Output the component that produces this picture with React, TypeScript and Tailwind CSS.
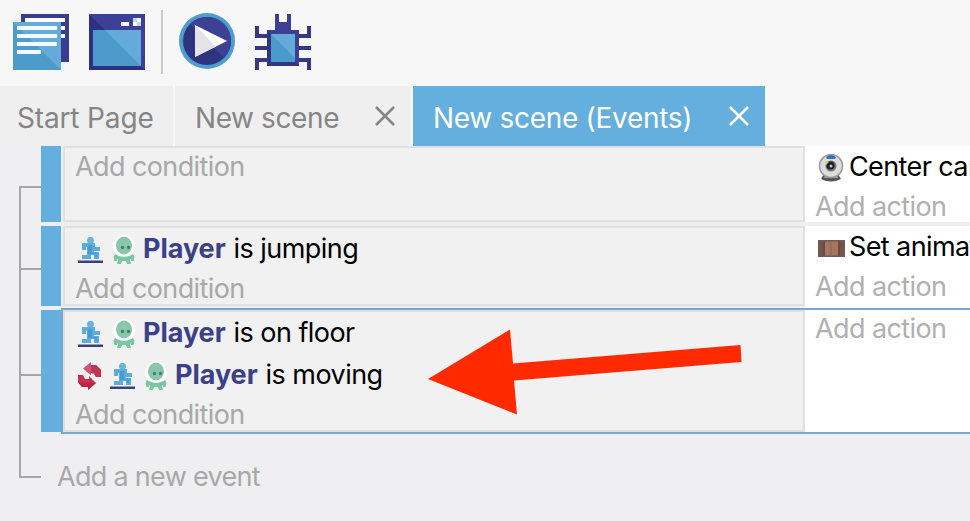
import React from "react";

const PlatformerIcon = () => (
  <svg className="h-[26px] w-[26px] shrink-0" viewBox="0 0 26 26">
    <circle cx="12.500" cy="3.300" r="3.500" fill="#68b3e0" />
    <path d="M4 6h13v4h5v4h-6v1h5v7h-5v-4h-3v4H4v-4h5v-8H8v3H4z" fill="#5badde" />
    <path d="M10 8h4v8h5v4h-2v-3h-7z" fill="#4799d2" />
    <path d="M0 23.500h25V26H0z" fill="#3c3f7d" />
  </svg>
);

const AlienIcon = () => (
  <svg className="h-[32px] w-[24px] shrink-0" viewBox="0 0 24 32">
    <circle cx="12" cy="12" r="11" fill="#fff" />
    <path d="M3 20q9 5 18 0l1.500 3-1 4H19v-2l-1 1 1 4h-4l-1-3h-4l-1 3H5l1-4-1-1v2H2.500l-1-4z" fill="#7cc5a3" />
    <path d="M4 18.500q8 6 16 0v2q-8 4.500-16 0z" fill="#fff" />
    <ellipse cx="12" cy="11.500" rx="8" ry="9" fill="#88c7a9" />
    <circle cx="10.500" cy="13.500" r="1.700" fill="#477e67" />
    <circle cx="16.500" cy="13.500" r="1.700" fill="#477e67" />
  </svg>
);

const InvertIcon = () => (
  <svg className="h-[28px] w-[24px] shrink-0" viewBox="0 0 24 28">
    <path d="M5 6.500l8-6.500v3h5l5 5v7h-5l-2-3.500-3-.5v2.500z" fill="#d15575" />
    <path d="M13 3h5l5 5v7h-5l-2-3.500-3-.5z" fill="#bd3552" />
    <path d="M0 13h5l2 4h4v-3l7 7-8 7v-3H4l-4-5z" fill="#c9304f" />
    <path d="M4 21h9l5 0-8 7v-3H4l-4-5z" fill="#b72845" />
  </svg>
);

const CameraIcon = () => (
  <svg className="h-[28px] w-[26px] shrink-0" viewBox="0 0 26 28">
    <path d="M6 20h14l3 5q-10 5-20 0z" fill="#555" />
    <path d="M7 22h12l1 2H6z" fill="#aaa" />
    <circle cx="13" cy="12" r="11.500" fill="#dcdcdc" stroke="#999" strokeWidth="1.500" />
    <path d="M8 3q5-4 10 0l-1 2H9z" fill="#3d70b9" />
    <circle cx="13" cy="12" r="5.500" fill="#777" />
    <circle cx="12.500" cy="11.500" r="4" fill="#1d2022" />
    <circle cx="13" cy="12" r="1.500" fill="#b8c5ca" />
    <path d="M7 7l4 1-3 3z" fill="#e2cd3c" />
  </svg>
);

const FilmIcon = () => (
  <svg className="h-[17px] w-[27px] shrink-0" viewBox="0 0 27 17">
    <path d="M0 0h27v17H0z" fill="#715b54" />
    <path d="M1 1.500h25v14H1z" fill="#76564c" />
    <path d="M7 1.500h13v14H7z" fill="#a7765e" />
    <path d="M12 1.500h2v14h-2z" fill="#986d58" />
    <path d="M20 1.500h2v14h-2zM5 1.500h2v14H5z" fill="#664c43" />
  </svg>
);

const ProjectIcon = () => (
  <svg className="h-[58px] w-[58px]" viewBox="0 0 58 58">
    <path d="M9 1h48v48H9z" fill="#393d91" />
    <path d="M13 5h40v4H13zM48 13h5v4h-5zM48 21h5v4h-5z" fill="#fff" />
    <path d="M1 9h48v48H1z" fill="#4c9bcb" />
    <path d="M1 9h48v48z" fill="#65abda" />
    <path d="M5 13h40v4H5zM5 21h40v4H5zM5 29h40v4H5zM5 37h24v4H5z" fill="#f3f8fd" />
  </svg>
);

const SceneIcon = () => (
  <svg className="h-[58px] w-[58px]" viewBox="0 0 58 58">
    <path d="M1 1h56v56H1z" fill="#2c3281" />
    <path d="M1 1h56v56z" fill="#3c4096" />
    <path d="M5 17h48v36H5z" fill="#4c9bcb" />
    <path d="M17 17h36v36z" fill="#65abda" />
    <path d="M33 9h8v4h-8z" fill="#fff" />
    <path d="M45 5h8v8h-8z" fill="#b8dcec" />
    <path d="M49 5h4v4h-4zM45 9h4v4h-4z" fill="#fff" />
  </svg>
);

const PlayIcon = () => (
  <svg className="h-[58px] w-[58px]" viewBox="0 0 58 58">
    <circle cx="29" cy="29" r="28" fill="#4d9dce" />
    <circle cx="29" cy="29" r="24" fill="#2e347f" />
    <path d="M12 12a24 24 0 0 1 34 34z" fill="#3d4194" />
    <path d="M17 13l32 16-32 16z" fill="#fff" />
    <path d="M17 13l21 21.500L17 45z" fill="#e4e4e7" />
  </svg>
);

const BugIcon = () => (
  <svg className="h-[58px] w-[58px]" viewBox="0 0 58 58">
    <path d="M21 1h4v8h8V1h4v17H21z" fill="#3c4092" />
    <path d="M3 13v10h12M55 13v10H43M1 35h14M57 35H43M3 57V47h12M55 57V47H43" fill="none" stroke="#353984" strokeWidth="4" />
    <path d="M13 17h32v36H13z" fill="#30377f" />
    <path d="M13 17h32v36z" fill="#3c4092" />
    <path d="M17 21h24v28H17z" fill="#4b9acb" />
    <path d="M17 21h24v24z" fill="#65abd9" />
  </svg>
);

const Close = () => (
  <svg className="h-[20px] w-[20px] shrink-0" viewBox="0 0 20 20" fill="none" stroke="currentColor" strokeWidth="2.500">
    <path d="M1 1l18 18M19 1L1 19" />
  </svg>
);

const AddCondition = () => (
  <div className="flex h-[40px] items-center text-[27px] tracking-[-0.6px] text-[#a8a8a8]">Add condition</div>
);

const AddAction = () => (
  <div className="flex h-[40px] items-center text-[27px] tracking-[-0.6px] text-[#b0b0b0]">Add action</div>
);

const Condition = ({ label, inverted = false }: { label: string; inverted?: boolean }) => (
  <div className="flex h-[40px] items-center pl-[3px]">
    {inverted && <div className="mt-[3px] mr-[8px] flex"><InvertIcon /></div>}
    <div className="mt-[3px] flex"><PlatformerIcon /></div>
    <div className="mt-[4px] ml-[8px] flex"><AlienIcon /></div>
    <span className="ml-[7px] text-[27px] font-bold tracking-[-0.05px] text-[#3b4087]">Player</span>
    <span className="ml-[8px] text-[27px] tracking-[-0.55px] text-black">{label}</span>
  </div>
);

const Tree = ({ first = false, top }: { first?: boolean; top: string }) => (
  <div className="flex w-[41px] shrink-0 flex-col pl-[19px]">
    <div className={`${top} shrink-0 ${first ? "" : "border-l-2"} border-[#a6a6a9]`} />
    <div className="flex-1 border-l-2 border-t-2 border-[#a6a6a9]" />
  </div>
);

export default function App() {
  return (
    <div className="relative flex h-[521px] w-[970px] flex-col overflow-hidden bg-[#efeff1] font-['Inter',sans-serif] leading-none whitespace-nowrap">
      <header className="flex h-[86px] shrink-0 items-start bg-[#f7f7f7] pt-[10px] pl-[12px]">
        <div className="mt-[3px] flex"><ProjectIcon /></div>
        <div className="mt-[3px] ml-[18px] flex"><SceneIcon /></div>
        <div className="ml-[15px] h-[64px] w-[2px] bg-[#cdcdcd]" />
        <div className="mt-[2px] ml-[15px] flex"><PlayIcon /></div>
        <div className="mt-[3px] ml-[18px] flex"><BugIcon /></div>
      </header>

      <nav className="flex h-[60px] shrink-0 bg-[#f7f7f7] text-[28px] text-[#858585]">
        <div className="flex w-[173px] items-center bg-[#efefef] pt-[3px] pl-[17px] tracking-[-0.15px]">Start Page</div>
        <div className="ml-[2px] flex w-[236px] items-center bg-[#efefef] pl-[20px]">
          <span className="w-[180px] pt-[3px] tracking-[-0.4px]">New scene</span>
          <Close />
        </div>
        <div className="ml-[2px] flex w-[352px] items-center bg-[#64afde] pl-[20px] text-white">
          <span className="w-[296px] pt-[3px] tracking-[-0.3px]">New scene (Events)</span>
          <Close />
        </div>
      </nav>

      <main className="flex flex-1 flex-col">
        <section className="flex h-[80px] shrink-0">
          <Tree first top="h-[40px]" />
          <div className="h-[76px] w-[20px] shrink-0 bg-[#64afde]" />
          <div className="ml-[2px] h-[76px] w-[742px] shrink-0 border-2 border-[#e0e0e1] bg-[#f1f1f1] pl-[10px]">
            <div className="-mt-[2px]"><AddCondition /></div>
          </div>
          <div className="h-[76px] min-w-0 flex-1 overflow-hidden bg-white pl-[10px]">
            <div className="flex h-[40px] items-center pl-[3px]">
              <div className="mt-[3px] flex"><CameraIcon /></div>
              <span className="ml-[5px] text-[27px] tracking-[-0.6px]">Center camera</span>
            </div>
            <AddAction />
          </div>
        </section>

        <section className="flex h-[82px] shrink-0">
          <Tree top="h-[42px]" />
          <div className="h-[80px] w-[20px] shrink-0 bg-[#64afde]" />
          <div className="ml-[2px] h-[80px] w-[742px] shrink-0 border-2 border-[#e0e0e1] bg-[#f1f1f1] pl-[10px]">
            <Condition label="is jumping" />
            <AddCondition />
          </div>
          <div className="h-[82px] min-w-0 flex-1 overflow-hidden bg-white pl-[10px]">
            <div className="flex h-[40px] items-center pl-[3px]">
              <div className="mt-[4px] flex"><FilmIcon /></div>
              <span className="ml-[4px] text-[27px] tracking-[-0.6px]">Set animation</span>
            </div>
            <AddAction />
          </div>
        </section>

        <section className="flex h-[126px] shrink-0">
          <Tree top="h-[66px]" />
          <div className="my-[2px] w-[20px] shrink-0 bg-[#64afde]" />
          <div className="flex min-w-0 flex-1 border-y-2 border-l-2 border-[#77a9d0]">
            <div className="w-[742px] shrink-0 border-2 border-[#e0e0e1] bg-[#f1f1f1] pl-[10px]">
              <Condition label="is on floor" />
              <div className="mt-[2px]"><Condition label="is moving" inverted /></div>
              <AddCondition />
            </div>
            <div className="min-w-0 flex-1 overflow-hidden bg-white pl-[10px]">
              <div className="-mt-[2px]"><AddAction /></div>
            </div>
          </div>
        </section>

        <footer className="flex h-[87px]">
          <div className="ml-[19px] h-[44px] w-[22px] border-b-2 border-l-2 border-[#a6a6a9]" />
          <span className="ml-[16px] pt-[29px] text-[27px] tracking-[-0.7px] text-[#a8a8a8]">Add a new event</span>
        </footer>
      </main>

      <svg className="absolute top-[328px] left-[427px] h-[88px] w-[317px]" viewBox="0 0 317 88">
        <path d="M1 51L83 1.500l3 34L313.500 17l1 17L87 52.500l3 34z" fill="#ff2a00" />
      </svg>
    </div>
  );
}
